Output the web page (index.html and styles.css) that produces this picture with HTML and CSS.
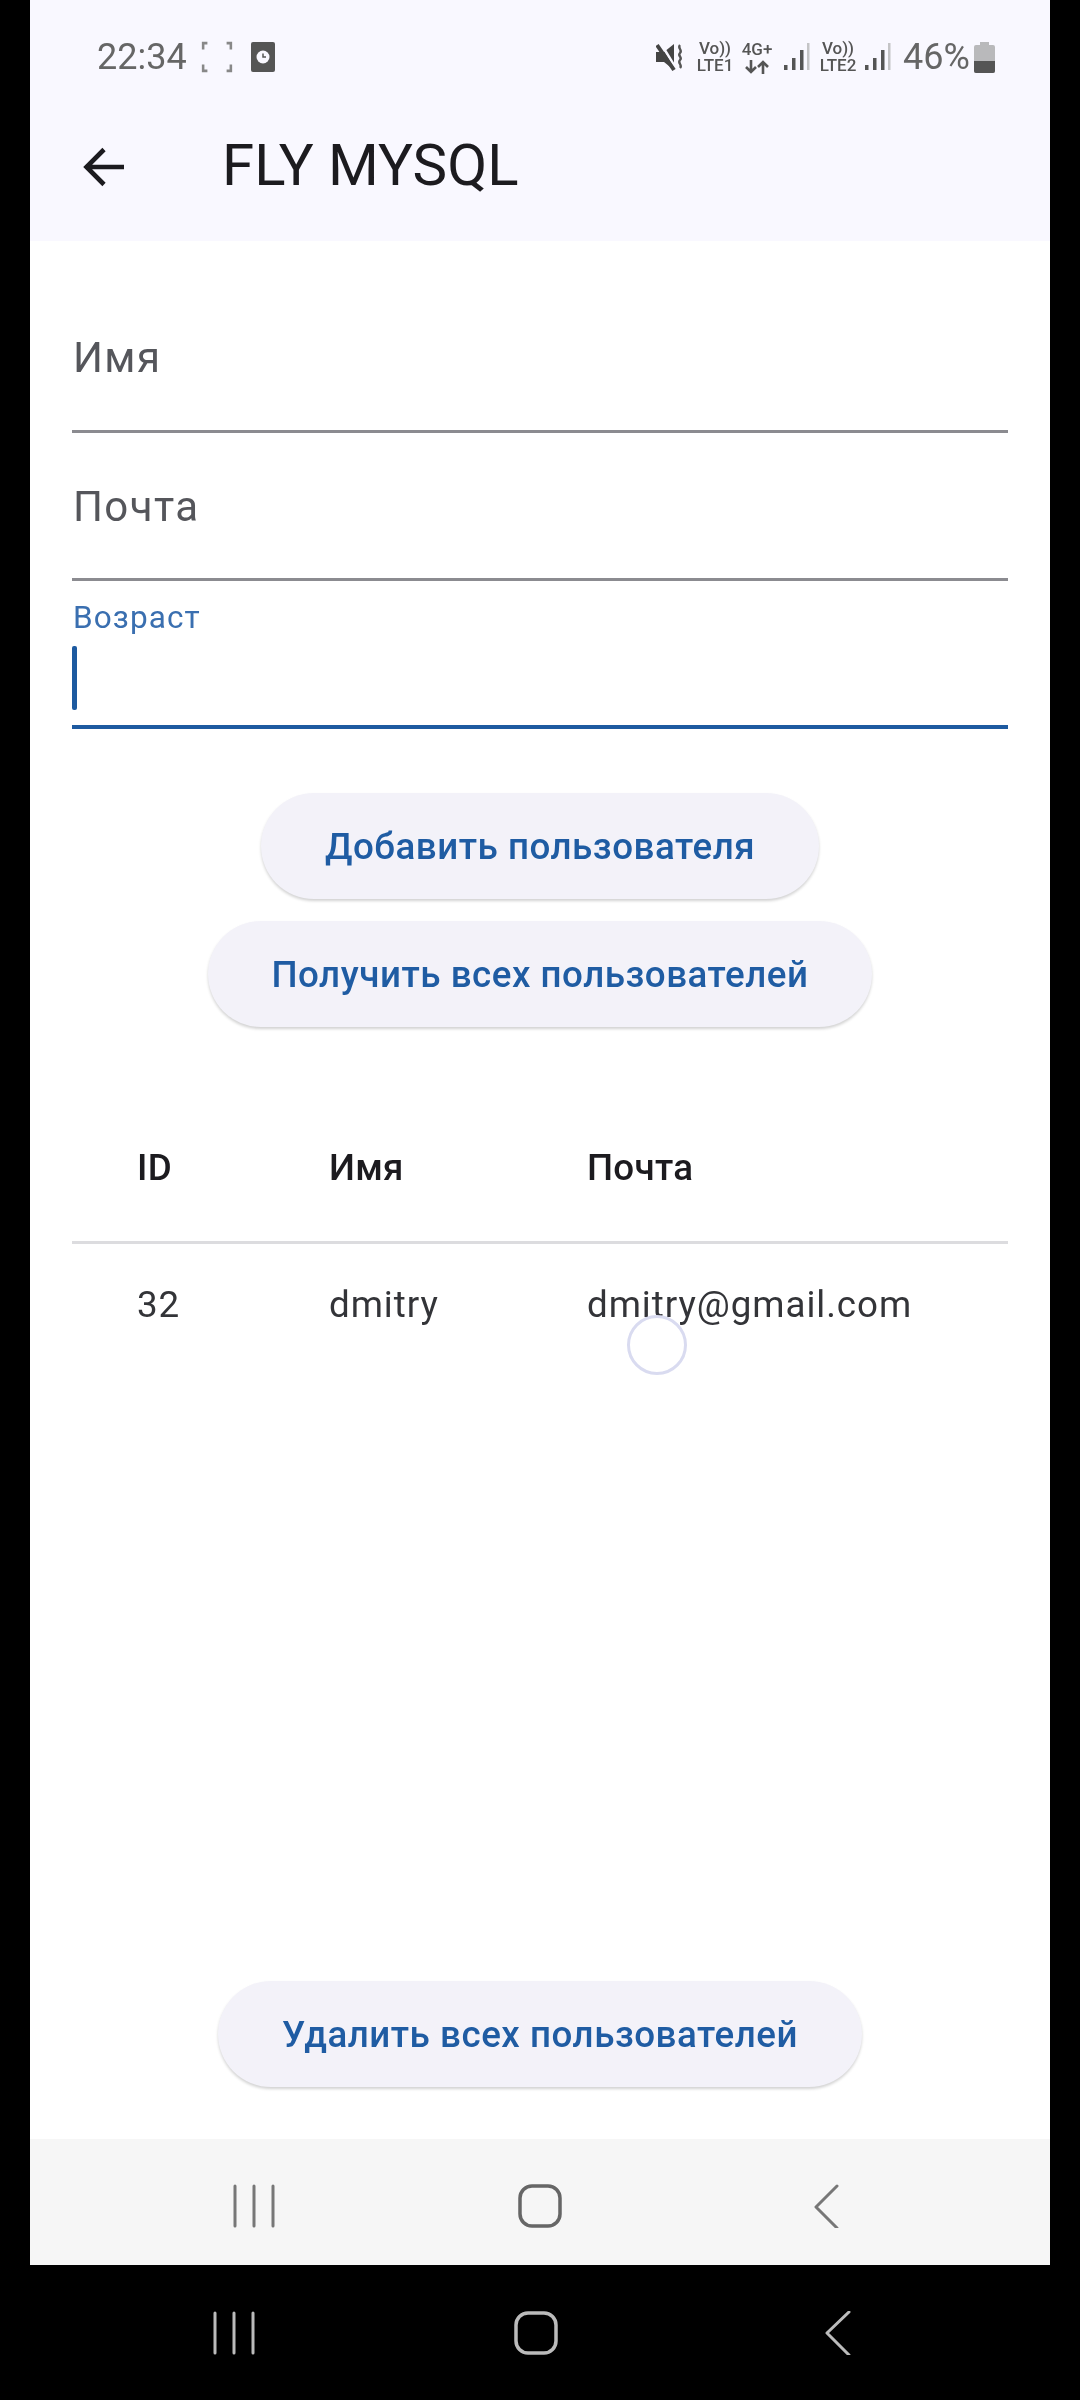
FILE: index.html
```html
<!DOCTYPE html>
<html lang="ru">
<head>
<meta charset="utf-8">
<title>FLY MYSQL</title>
<link rel="stylesheet" href="styles.css">
</head>
<body>
<div class="screen">
  <header class="top">
    <div class="status">
      <span class="time">22:34</span>
      <svg class="ic-scan" viewBox="0 0 30 30"><path d="M2 8V2h4M24 2h4v6M28 22v6h-4M6 28H2v-6" fill="none" stroke="#888" stroke-width="2.400"/></svg>
      <svg class="ic-clock" viewBox="0 0 24 30"><rect width="24" height="30" rx="2" fill="#555"/><circle cx="12" cy="15" r="6.500" fill="#f9f8ff"/><path d="M12 11.500V15h3" fill="none" stroke="#555" stroke-width="1.500"/></svg>
      <span class="status-right">
        <svg class="ic-mute" viewBox="0 0 30 30"><path d="M0 10h8l10-8v26l-10-8H0z" fill="#444"/><path d="M4 0l17 28" stroke="#f9f8ff" stroke-width="2.500"/><path d="M1 3l17 25" stroke="#444" stroke-width="4"/><path d="M24 3c-3 3 3 5 0 8s3 4 0 7 3 5 0 8" fill="none" stroke="#555" stroke-width="2.400"/></svg>
        <span class="net net-a">Vo))<br>LTE1</span>
        <span class="net net-b">
          <span>4G+</span>
          <svg class="ic-arrows" viewBox="0 0 26 14"><path d="M7 0v12M2 7l5 5 5-5M19 14V2M14 7l5-5 5 5" fill="none" stroke="#555" stroke-width="2.600"/></svg>
        </span>
        <svg class="ic-sig" viewBox="0 0 27 28"><rect x="1" y="22" width="3.500" height="5" fill="#555"/><rect x="9" y="15" width="3.500" height="12" fill="#555"/><rect x="17" y="7" width="3.500" height="20" fill="#555"/><rect x="24" y="0" width="2.500" height="27" fill="#c4c4c6"/></svg>
        <span class="net net-c">Vo))<br>LTE2</span>
        <svg class="ic-sig" viewBox="0 0 27 28"><rect x="1" y="22" width="3.500" height="5" fill="#555"/><rect x="9" y="15" width="3.500" height="12" fill="#555"/><rect x="17" y="7" width="3.500" height="20" fill="#555"/><rect x="24" y="0" width="2.500" height="27" fill="#c4c4c6"/></svg>
        <span class="batt-text">46%</span>
        <svg class="ic-batt" viewBox="0 0 21 31"><path d="M6 0h9v3h4a2 2 0 0 1 2 2v24a2 2 0 0 1-2 2H2a2 2 0 0 1-2-2V5a2 2 0 0 1 2-2h4z" fill="#b9b9bb"/><path d="M0 19h21v10a2 2 0 0 1-2 2H2a2 2 0 0 1-2-2z" fill="#555"/></svg>
      </span>
    </div>
    <div class="appbar">
      <svg class="ic-back" viewBox="0 0 42 42"><path d="M41 21H4M21 3.500L3.500 21 21 38.500" fill="none" stroke="#1c1b1f" stroke-width="4.600"/></svg>
      <h1 class="title">FLY MYSQL</h1>
    </div>
  </header>

  <main class="content">
    <section class="form">
      <div class="field"><span class="label">Имя</span></div>
      <div class="field field-b"><span class="label">Почта</span></div>
      <div class="field focused">
        <span class="label-small">Возраст</span>
        <span class="caret"></span>
      </div>
    </section>

    <section class="actions">
      <button class="btn btn-add">Добавить пользователя</button>
      <button class="btn btn-get">Получить всех пользователей</button>
    </section>

    <section class="table">
      <div class="row head"><span>ID</span><span>Имя</span><span>Почта</span></div>
      <div class="row body-row">
        <span>32</span><span>dmitry</span><span>dmitry@gmail.com</span>
        <span class="touch"></span>
      </div>
    </section>

    <div class="bottom-action">
      <button class="btn btn-del">Удалить всех пользователей</button>
    </div>
  </main>

  <nav class="nav nav-inner">
    <span class="cell"><svg class="nav-ic" viewBox="0 0 44 44"><path d="M3 2v40M22 2v40M41 2v40" stroke="#777" stroke-width="3" stroke-linecap="round"/></svg></span>
    <span class="cell"><svg class="nav-ic" viewBox="0 0 44 44"><rect x="2" y="2" width="40" height="40" rx="12" fill="none" stroke="#666" stroke-width="3.500"/></svg></span>
    <span class="cell"><svg class="nav-ic" viewBox="0 0 44 44"><path d="M33 2L12 23l21 21" fill="none" stroke="#777" stroke-width="3" stroke-linecap="round" stroke-linejoin="round"/></svg></span>
  </nav>
</div>

<nav class="nav nav-outer">
  <span class="cell"><svg class="nav-ic" viewBox="0 0 44 44"><path d="M3 2v40M22 2v40M41 2v40" stroke="#bbb" stroke-width="3" stroke-linecap="round"/></svg></span>
  <span class="cell"><svg class="nav-ic" viewBox="0 0 44 44"><rect x="2" y="2" width="40" height="40" rx="12" fill="none" stroke="#bbb" stroke-width="3.500"/></svg></span>
  <span class="cell"><svg class="nav-ic" viewBox="0 0 44 44"><path d="M33 1L11 22l22 22" fill="none" stroke="#bbb" stroke-width="3" stroke-linecap="round" stroke-linejoin="round"/></svg></span>
</nav>
</body>
</html>
```

FILE: styles.css
```css
* { box-sizing: border-box; }
html, body { margin: 0; padding: 0; }
body {
  width: 1080px;
  height: 2400px;
  background: #000;
  font-family: Roboto, sans-serif;
  overflow: hidden;
}
.screen {
  margin: 0 30px;
  width: 1020px;
  height: 2265px;
  background: #fff;
  display: flex;
  flex-direction: column;
}
.top { height: 241px; background: #f9f8ff; }

.status, .appbar, .form, .actions, .table, .bottom-action, .nav-inner .cell {
  filter: blur(.6px);
}

.status {
  height: 114px;
  padding: 0 0 0 67px;
  display: flex;
  align-items: center;
  color: #666;
}
.time { font-size: 36px; width: 104px; color: #666; }
.ic-scan { width: 32px; height: 32px; margin-right: 18px; flex: none; }
.ic-clock { width: 24px; height: 30px; flex: none; }
.status-right {
  margin-left: auto;
  width: 393px;
  display: flex;
  align-items: center;
  color: #555;
}
.ic-mute { width: 30px; height: 30px; margin-right: 10px; margin-left: -1px; flex: none; }
.net {
  font-size: 17px;
  line-height: 17px;
  font-weight: 500;
  text-align: center;
  flex: none;
}
.net-a { width: 38px; margin-right: 7px; }
.net-b {
  width: 32px;
  margin-right: 10px;
  display: flex;
  flex-direction: column;
  align-items: center;
  gap: 2px;
}
.net-c { width: 40px; margin-right: 6px; }
.ic-arrows { width: 26px; height: 14px; }
.ic-sig { width: 27px; height: 28px; margin-right: 8px; flex: none; }
.batt-text { font-size: 36px; width: 71px; margin-left: 4px; color: #666; flex: none; }
.ic-batt { width: 21px; height: 31px; flex: none; }

.appbar {
  height: 100px;
  padding-left: 53px;
  display: flex;
  align-items: center;
}
.ic-back { width: 42px; height: 42px; margin-top: 5px; flex: none; }
.title {
  margin: 2px 0 0 97px;
  font-size: 58.2px;
  font-weight: 400;
  color: #1c1b1f;
  line-height: 66px;
}

.content { flex: 1; display: flex; flex-direction: column; }
.form { padding: 45px 42px 0; }
.field {
  height: 147px;
  border-bottom: 3px solid #8b8b90;
  position: relative;
  display: flex;
  flex-direction: column;
  justify-content: flex-end;
}
.field-b { height: 148px; }
.label {
  font-size: 42px;
  line-height: 50px;
  letter-spacing: 1.4px;
  color: #55565b;
  padding: 0 0 47px 1px;
}
.field-b .label { padding-bottom: 46px; }
.focused { border-bottom: 4px solid #1d5aa0; height: 148px; }
.label-small {
  font-size: 31.5px;
  line-height: 38px;
  letter-spacing: 1.1px;
  color: #3a6fb0;
  padding: 0 0 0 1px;
  margin-bottom: 88px;
}
.caret {
  position: absolute;
  left: 0;
  bottom: 15px;
  width: 5px;
  height: 64px;
  border-radius: 2px;
  background: #1d5aa0;
}

.actions {
  padding-top: 64px;
  display: flex;
  flex-direction: column;
  align-items: center;
  gap: 22px;
}
.btn {
  display: block;
  height: 106px;
  border: 0;
  border-radius: 53px;
  background: #f3f2f9;
  box-shadow: 0 2px 3px rgba(0, 0, 0, .18);
  color: #1f5ca3;
  font-family: Roboto, sans-serif;
  font-size: 36.75px;
  font-weight: 500;
  letter-spacing: .52px;
  padding: 0;
}
.btn-add { width: 558px; }
.btn-get { width: 664px; }
.btn-del { width: 644px; }

.table { margin: 80px 42px 0; }
.row {
  display: grid;
  grid-template-columns: 192px 258px 1fr;
  padding-left: 65px;
  align-items: center;
  color: #1c1b1f;
  font-size: 36.75px;
}
.head {
  height: 137px;
  padding-bottom: 13px;
  font-weight: 500;
  letter-spacing: .26px;
  border-bottom: 3px solid #dcdcdf;
}
.body-row {
  height: 120px;
  position: relative;
  color: #333438;
  letter-spacing: .95px;
}
.touch {
  position: absolute;
  left: 555px;
  top: 71px;
  width: 60px;
  height: 60px;
  border-radius: 50%;
  border: 3px solid #d9dbf0;
}

.bottom-action {
  margin-top: auto;
  padding-bottom: 52px;
  display: flex;
  justify-content: center;
}

.nav { display: grid; align-items: center; justify-items: center; }
.nav-inner {
  height: 126px;
  background: #f6f6f6;
  grid-template-columns: repeat(3, 286px);
  padding: 8px 0 0 81px;
}
.nav-outer {
  height: 135px;
  grid-template-columns: repeat(3, 302px);
  padding-left: 83px;
}
.cell { display: flex; }
.nav-ic { width: 44px; height: 44px; }
```
